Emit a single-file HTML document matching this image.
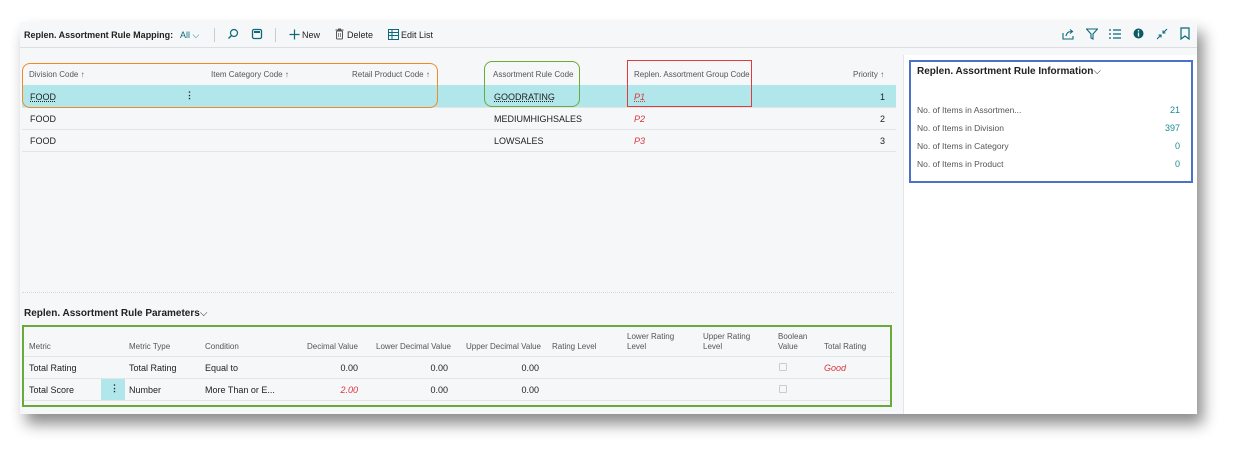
<!DOCTYPE html>
<html><head><meta charset="utf-8"><style>
*{margin:0;padding:0;box-sizing:border-box}
body{width:1239px;height:457px;background:#fff;font-family:"Liberation Sans",sans-serif;position:relative;overflow:hidden;color:#212121}
.a{position:absolute;white-space:nowrap}
.main{left:20px;top:22px;width:1177px;height:392px;background:#f6f7f8;box-shadow:6px 10px 14px rgba(0,0,0,.45)}
.h{font-size:8px;color:#555}
.t{font-size:9px;color:#222}
.line{position:absolute;height:1px;background:#e2e4e6}
.red{color:#d9363e;font-style:italic}
.teal{color:#1a8a94}
svg{position:absolute}
</style></head><body>
<div class="a main"></div>
<!-- toolbar -->
<div class="a t" style="left:24px;top:30px;font-weight:bold;font-size:9px">Replen. Assortment Rule Mapping:</div>
<div class="a t" style="left:180px;top:30px;color:#0b6a7a">All ⌵</div>
<div class="a" style="left:214px;top:28px;width:1px;height:14px;background:#ccc"></div>
<div class="a" style="left:275px;top:28px;width:1px;height:14px;background:#ccc"></div>
<svg style="left:227px;top:28px" width="12" height="12"><circle cx="7" cy="5" r="3.5" fill="none" stroke="#0b6a7a" stroke-width="1.2"/><path d="M4.5 7.5L1.5 10.5" stroke="#0b6a7a" stroke-width="1.3"/></svg>
<svg style="left:251px;top:28px" width="12" height="12"><rect x="1.5" y="1.5" width="9" height="9" rx="1.5" fill="none" stroke="#0b6a7a" stroke-width="1.3"/><rect x="3" y="3" width="6" height="2" fill="#0b6a7a"/></svg>
<svg style="left:289px;top:29px" width="11" height="11"><path d="M5.5 0.5V10.5M0.5 5.5H10.5" stroke="#0b6a7a" stroke-width="1.2"/></svg>
<div class="a t" style="left:302px;top:30px">New</div>
<svg style="left:335px;top:28px" width="9" height="12"><rect x="1.5" y="3" width="6" height="8" rx="1" fill="none" stroke="#555" stroke-width="1"/><path d="M0.5 2H8.5M3 1H6" stroke="#555"/><path d="M3.5 5V9M5.5 5V9" stroke="#555" stroke-width=".7"/></svg>
<div class="a t" style="left:347px;top:30px">Delete</div>
<svg style="left:388px;top:29px" width="11" height="11"><rect x="0.5" y="0.5" width="10" height="10" fill="none" stroke="#0b6a7a"/><path d="M0.5 3.5H10.5M0.5 6.5H10.5M4 0.5V10.5" stroke="#0b6a7a"/></svg>
<div class="a t" style="left:401px;top:30px">Edit List</div>
<svg style="left:1062px;top:28px" width="12" height="12"><path d="M1 5V11H11V8" fill="none" stroke="#0b6a7a" stroke-width="1.1"/><path d="M4 8C5 4 7 3.5 10 3.5M8 1.5L10.5 3.5L8 5.5" fill="none" stroke="#0b6a7a" stroke-width="1.1"/></svg>
<svg style="left:1086px;top:28px" width="12" height="12"><path d="M0.5 1H11.5L7 6V11L5 10V6Z" fill="none" stroke="#0b6a7a" stroke-width="1.1"/></svg>
<svg style="left:1109px;top:29px" width="12" height="10"><path d="M0 1H2M4 1H12M0 5H2M4 5H12M0 9H2M4 9H12" stroke="#0b6a7a" stroke-width="1.2"/></svg>
<svg style="left:1133px;top:28px" width="11" height="11"><circle cx="5.5" cy="5.5" r="5" fill="#0b5a66"/><path d="M5.5 4.5V8.5" stroke="#fff" stroke-width="1.3"/><circle cx="5.5" cy="2.8" r=".8" fill="#fff"/></svg>
<svg style="left:1156px;top:28px" width="12" height="12"><path d="M1 11L5 7M2.5 7H5V9.5M11 1L7 5M7 2.5V5H9.5" fill="none" stroke="#0b6a7a" stroke-width="1.1"/></svg>
<svg style="left:1180px;top:27px" width="10" height="13"><path d="M1 1H9V12L5 9L1 12Z" fill="none" stroke="#0b6a7a" stroke-width="1.2"/></svg>
<div class="line" style="left:20px;top:47px;width:1177px;background:#dcdfe2"></div>

<!-- grid -->
<div class="a h" style="left:29px;top:70px">Division Code ↑</div>
<div class="a h" style="left:211px;top:70px">Item Category Code ↑</div>
<div class="a h" style="left:352px;top:70px">Retail Product Code ↑</div>
<div class="a h" style="left:493px;top:70px">Assortment Rule Code</div>
<div class="a h" style="left:634px;top:70px">Replen. Assortment Group Code</div>
<div class="a h" style="left:853px;top:70px">Priority ↑</div>
<div class="a" style="left:22px;top:85px;width:874px;height:22px;background:#b1e7ea"></div>
<div class="line" style="left:22px;top:107px;width:874px"></div>
<div class="line" style="left:22px;top:129px;width:874px"></div>
<div class="line" style="left:22px;top:151px;width:874px"></div>
<div class="a t" style="left:30px;top:92px;text-decoration:underline dotted">FOOD</div>
<div class="a t" style="left:185px;top:90px;font-weight:bold">⋮</div>
<div class="a t" style="left:494px;top:92px;text-decoration:underline dotted">GOODRATING</div>
<div class="a t red" style="left:634px;top:92px;text-decoration:underline dotted">P1</div>
<div class="a t" style="left:880px;top:92px">1</div>
<div class="a t" style="left:30px;top:114px">FOOD</div>
<div class="a t" style="left:494px;top:114px">MEDIUMHIGHSALES</div>
<div class="a t red" style="left:634px;top:114px">P2</div>
<div class="a t" style="left:880px;top:114px">2</div>
<div class="a t" style="left:30px;top:136px">FOOD</div>
<div class="a t" style="left:494px;top:136px">LOWSALES</div>
<div class="a t red" style="left:634px;top:136px">P3</div>
<div class="a t" style="left:880px;top:136px">3</div>
<div class="a" style="left:22px;top:63px;width:416px;height:45px;border:1.5px solid #f08a24;border-radius:8px"></div>
<div class="a" style="left:484px;top:61px;width:96px;height:46px;border:1.5px solid #6aaa3a;border-radius:8px"></div>
<div class="a" style="left:627px;top:60px;width:125px;height:47px;border:1.5px solid #e03a3a"></div>

<!-- factbox -->
<div class="a" style="left:903px;top:55px;width:294px;height:359px;background:#fff;border-left:1px solid #e5e5e5"></div>
<div class="a" style="left:909px;top:60px;width:284px;height:123px;border:2px solid #4a72c8"></div>
<div class="a" style="left:917px;top:66px;font-size:10px;font-weight:bold">Replen. Assortment Rule Information<span style="font-weight:normal">⌵</span></div>
<div class="a h" style="left:917px;top:105px;font-size:8.5px">No. of Items in Assortmen...</div>
<div class="a h" style="left:917px;top:123px;font-size:8.5px">No. of Items in Division</div>
<div class="a h" style="left:917px;top:141px;font-size:8.5px">No. of Items in Category</div>
<div class="a h" style="left:917px;top:159px;font-size:8.5px">No. of Items in Product</div>
<div class="a t teal" style="left:1168px;top:105px;width:12px;text-align:right">21</div>
<div class="a t teal" style="left:1158px;top:123px;width:22px;text-align:right">397</div>
<div class="a t teal" style="left:1168px;top:141px;width:12px;text-align:right">0</div>
<div class="a t teal" style="left:1168px;top:159px;width:12px;text-align:right">0</div>

<!-- params -->
<div class="a" style="left:22px;top:292px;width:872px;border-top:1px dotted #d6d9dc"></div>
<div class="a" style="left:24px;top:308px;font-size:10px;font-weight:bold">Replen. Assortment Rule Parameters<span style="font-weight:normal">⌵</span></div>
<div class="a" style="left:22px;top:325px;width:870px;height:82px;border:2px solid #6aaa3a"></div>
<div class="a h" style="left:29px;top:342px">Metric</div>
<div class="a h" style="left:129px;top:342px">Metric Type</div>
<div class="a h" style="left:205px;top:342px">Condition</div>
<div class="a h" style="left:307px;top:342px">Decimal Value</div>
<div class="a h" style="left:376px;top:342px">Lower Decimal Value</div>
<div class="a h" style="left:466px;top:342px">Upper Decimal Value</div>
<div class="a h" style="left:552px;top:342px">Rating Level</div>
<div class="a h" style="left:627px;top:332px;line-height:10px">Lower Rating<br>Level</div>
<div class="a h" style="left:703px;top:332px;line-height:10px">Upper Rating<br>Level</div>
<div class="a h" style="left:778px;top:332px;line-height:10px">Boolean<br>Value</div>
<div class="a h" style="left:824px;top:342px">Total Rating</div>
<div class="line" style="left:24px;top:356px;width:866px"></div>
<div class="line" style="left:24px;top:378px;width:866px"></div>
<div class="line" style="left:24px;top:400px;width:866px"></div>
<div class="a" style="left:101px;top:379px;width:24px;height:21px;background:#b1e7ea"></div>
<div class="a t" style="left:110px;top:383px;font-weight:bold">⋮</div>
<div class="a t" style="left:29px;top:363px">Total Rating</div>
<div class="a t" style="left:129px;top:363px">Total Rating</div>
<div class="a t" style="left:205px;top:363px">Equal to</div>
<div class="a t" style="left:320px;top:363px;width:38px;text-align:right">0.00</div>
<div class="a t" style="left:410px;top:363px;width:38px;text-align:right">0.00</div>
<div class="a t" style="left:501px;top:363px;width:38px;text-align:right">0.00</div>
<div class="a" style="left:779px;top:363px;width:8px;height:8px;border:1px solid #ccc;border-radius:1px"></div>
<div class="a t red" style="left:824px;top:363px">Good</div>
<div class="a t" style="left:29px;top:385px">Total Score</div>
<div class="a t" style="left:129px;top:385px">Number</div>
<div class="a t" style="left:205px;top:385px">More Than or E...</div>
<div class="a t red" style="left:320px;top:385px;width:38px;text-align:right">2.00</div>
<div class="a t" style="left:410px;top:385px;width:38px;text-align:right">0.00</div>
<div class="a t" style="left:501px;top:385px;width:38px;text-align:right">0.00</div>
<div class="a" style="left:779px;top:385px;width:8px;height:8px;border:1px solid #ccc;border-radius:1px"></div>
</body></html>
